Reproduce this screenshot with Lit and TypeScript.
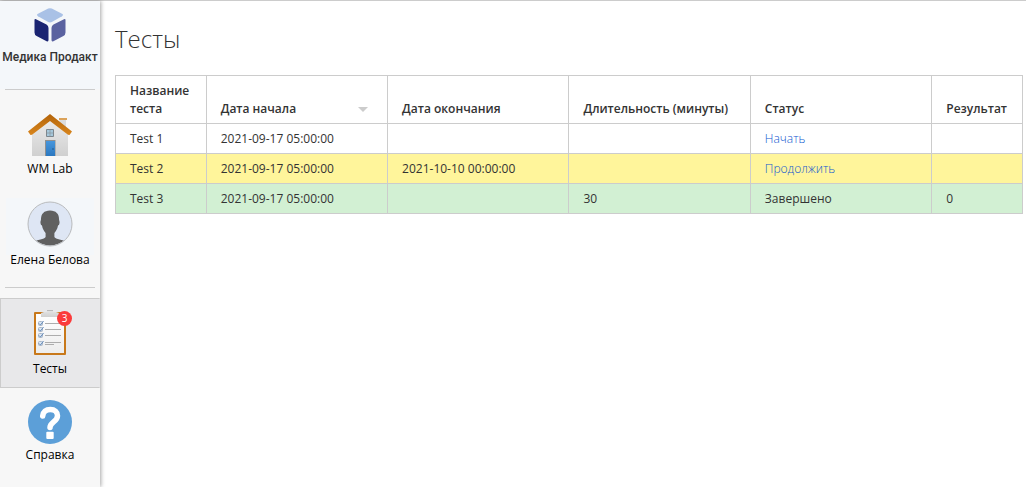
import { LitElement, html, css, svg, nothing } from "lit";
import { customElement, property } from "lit/decorators.js";

interface TestRow {
  name: string;
  start: string;
  end: string;
  minutes: string;
  status: string;
  action: boolean;
  result: string;
  tone: string;
}

const ROWS: TestRow[] = [
  { name: "Test 1", start: "2021-09-17 05:00:00", end: "", minutes: "", status: "Начать", action: true, result: "", tone: "" },
  { name: "Test 2", start: "2021-09-17 05:00:00", end: "2021-10-10 00:00:00", minutes: "", status: "Продолжить", action: true, result: "", tone: "active" },
  { name: "Test 3", start: "2021-09-17 05:00:00", end: "", minutes: "30", status: "Завершено", action: false, result: "0", tone: "done" },
];

const logoIcon = html`<svg width="32" height="34" viewBox="0 0 32 34" aria-hidden="true">
  <path d="M14.2 .6Q16 -.3 17.8 .6L28 5.800Q30 7 28 8.200L17.800 14Q16 14.900 14.200 14L4 8.200Q2 7 4 5.800Z" fill="#a9c1e6"/>
  <path d="M.5 12Q.5 10.400 2 11.200L12.500 16.600Q14.500 17.800 14.500 20V32Q14.500 34 12.600 33.200L2.600 28Q.5 26.800 .5 24.500Z" fill="#1a2472"/>
  <path d="M31.500 12Q31.500 10.400 30 11.200L19.500 16.600Q17.500 17.800 17.500 20V32Q17.500 34 19.400 33.200L29.400 28Q31.500 26.800 31.500 24.500Z" fill="#5a62a0"/>
</svg>`;

const homeIcon = html`<svg width="44" height="44" viewBox="0 0 44 44" aria-hidden="true">
  <defs>
    <linearGradient id="wall" x1="0" y1="0" x2="0" y2="1"><stop offset="0" stop-color="#ededed"/><stop offset="1" stop-color="#d0d0d0"/></linearGradient>
    <linearGradient id="door" x1="0" y1="0" x2="0" y2="1"><stop offset="0" stop-color="#4796dc"/><stop offset="1" stop-color="#2c78c0"/></linearGradient>
    <linearGradient id="roof" x1="0" y1="0" x2="0" y2="1"><stop offset="0" stop-color="#b3640a"/><stop offset="1" stop-color="#d8851c"/></linearGradient>
  </defs>
  <path d="M31.500 5h6.500v12h-6.500z" fill="#dcdcdc"/>
  <path d="M31 4h8v2h-8z" fill="#dba25a"/>
  <path d="M4 18 22 3l18 15v24H4z" fill="url(#wall)"/>
  <path d="M22 0 44 17.500l-2.500 3.500-1.500-.2L22 7 4 20.800l-1.500.2L0 17.500z" fill="url(#roof)"/>
  <path d="M18.500 15.500h7v7h-7z" fill="#a5c8dc" stroke="#7d868c"/>
  <path d="M22 15.500v7M18.500 19h7" stroke="#8c969c" stroke-width=".7"/>
  <path d="M17 26h10.500v16H17z" fill="#8f8f8f"/>
  <path d="M18 27h9v15h-9z" fill="url(#door)"/>
  <circle cx="25" cy="35" r=".7" fill="#1b4670"/>
</svg>`;

const userIcon = html`<svg width="88" height="49" viewBox="-21 -1 88 49" overflow="visible" aria-hidden="true">
  <defs><clipPath id="face"><circle cx="23" cy="23" r="21.500"/></clipPath></defs>
  <rect x="-21" y="-3" width="88" height="57" fill="#f4f7fa"/>
  <circle cx="23" cy="23" r="22" fill="#dee6f4"/>
  <path clip-path="url(#face)" d="M23 9.500c-6 0-9 3.500-9 8.500 0 2-.9 2.300-.4 4.400.3 1.400.9 1.800 1.400 2.100.6 3.500 2 5.600 3.600 7.500V36c-1 2.500-8.600 2.500-12.600 5v6h34v-6c-4-2.500-11.600-2.500-12.600-5v-4c1.600-1.900 3-4 3.600-7.500.5-.3 1.100-.7 1.400-2.100.5-2.100-.4-2.400-.4-4.400 0-5-3-8.500-9-8.500Z" fill="#606060"/>
  <circle cx="23" cy="23" r="22" fill="none" stroke="#b9bbbd"/>
</svg>`;

const check = (y: number) => svg`
  <rect x="4.500" y=${y + 0.5} width="4" height="4" rx="1" fill="#dde7f2" stroke="#a9b6c6"/>
  <path d=${`M5 ${y + 2.5}l1.500 1.500L9.500 ${y}`} fill="none" stroke="#6288b8"/>`;

const testsIcon = html`<svg width="32" height="48" viewBox="0 0 32 48" aria-hidden="true">
  <defs>
    <linearGradient id="sheet" x1="0" y1="0" x2="0" y2="1"><stop offset="0" stop-color="#fff"/><stop offset="1" stop-color="#ededed"/></linearGradient>
    <linearGradient id="clip" x1="0" y1="0" x2="0" y2="1"><stop offset="0" stop-color="#e6e6e6"/><stop offset="1" stop-color="#d0d0d0"/></linearGradient>
  </defs>
  <rect y="2" width="32" height="43" rx="1" fill="#c8781a"/>
  <path d="M2 4h28v39H2z" fill="url(#sheet)"/>
  <path d="M13 0h6v2h3l3 1v4H7V3l3-1h3z" fill="url(#clip)"/>
  <path d="M13 .5h6" stroke="#b9b9b9"/>
  ${[11, 17, 23, 31].map(check)}
  <path d="M11 13.500h16M11 19.500h16M11 25.500h16M11 32.500h16M11 34.500h9" stroke="#adadad"/>
</svg>`;

const helpIcon = html`<svg width="44" height="44" viewBox="0 0 44 44" aria-hidden="true">
  <circle cx="22" cy="22" r="22" fill="#5c9fd8"/>
  <path d="M14.700 16c.3-4.300 3.300-6.500 7.600-6.500 4.500 0 7.200 2.500 7.200 6.200 0 6-7.500 6.300-7.500 11.800" fill="none" stroke="#fff" stroke-width="5.500" stroke-linecap="round"/>
  <rect x="18.300" y="31.800" width="7.400" height="7.200" rx="1" fill="#fff"/>
</svg>`;

@customElement("side-item")
class SideItem extends LitElement {
  static styles = css`
    :host { display: block; }
    .item {
      display: flex;
      flex-direction: column;
      align-items: center;
      gap: 3px;
      padding: 12px 0 11px;
      color: #000;
      font-size: 12px;
      line-height: 16px;
      text-decoration: none;
      white-space: nowrap;
    }
    .current {
      padding: 11px 0 10px;
      background: #e8e8ea;
      border: 1px solid #ccc;
      border-right-color: transparent;
    }
    .icon { position: relative; display: flex; }
    .label { position: relative; }
    .badge {
      position: absolute;
      top: 1px;
      right: -6px;
      width: 15px;
      height: 15px;
      border-radius: 50%;
      background: #fb3b3b;
      color: #fff;
      font-size: 10px;
      line-height: 15px;
      text-align: center;
    }
  `;
  @property() label = "";
  @property() badge = "";
  @property({ type: Boolean }) current = false;
  @property({ attribute: false }) icon: unknown = nothing;

  render() {
    return html`<a class="item ${this.current ? "current" : ""}" href="#" aria-current=${this.current ? "page" : nothing}>
      <span class="icon">${this.icon}${this.badge ? html`<span class="badge">${this.badge}</span>` : nothing}</span>
      <span class="label">${this.label}</span>
    </a>`;
  }
}

@customElement("app-root")
class AppRoot extends LitElement {
  static styles = css`
    :host {
      box-sizing: border-box;
      display: flex;
      min-height: 100vh;
      border-top: 1px solid #ccc;
      background: #fff;
      color: #333;
      font-family: "Open Sans", "Noto Sans", sans-serif;
      font-size: 12px;
      line-height: 18px;
    }
    .side {
      flex: none;
      width: 100px;
      background: #f7f7f7;
      box-shadow: 1px 0 4px rgba(0, 0, 0, 0.35);
    }
    .logo {
      display: flex;
      flex-direction: column;
      align-items: center;
      gap: 7px;
      height: 81px;
      padding-top: 7px;
      background: #f4f7fa;
      color: #333;
      font: 500 12px/16px Roboto, sans-serif;
      text-decoration: none;
      white-space: nowrap;
    }
    .rule { margin: 0 5px; border: 0; border-top: 1px solid #ccc; }
    .group { padding: 12px 0 8px; }
    .tools { padding: 10px 0 8px; }
    .main { flex: 1; min-width: 0; padding: 21px 3px 0 15px; }
    .title { margin: 0 0 19px; font-size: 24px; line-height: 34px; font-weight: 300; }
    .tests { width: 100%; table-layout: fixed; border-collapse: collapse; }
    .tests th, .tests td {
      box-sizing: border-box;
      height: 30px;
      padding: 6px 14px 5px;
      border: 1px solid #ccc;
      text-align: left;
      vertical-align: bottom;
    }
    .tests th { font-weight: 600; }
    .tests .narrow { width: 10%; }
    .tests .wide { width: 20%; }
    .sort { display: flex; align-items: center; justify-content: space-between; padding-right: 5px; }
    .arrow { border: 5px solid transparent; border-top-color: #ccc; border-bottom: 0; }
    .active { background: #fff59b; }
    .done { background: #d2f0d3; }
    .link { color: #0f58d0; font-weight: 300; text-decoration: none; }
  `;

  render() {
    return html`
      <nav class="side">
        <a class="logo" href="#">${logoIcon}<span>Медика Продакт</span></a>
        <hr class="rule" />
        <div class="group">
          <side-item label="WM Lab" .icon=${homeIcon}></side-item>
          <side-item label="Елена Белова" .icon=${userIcon}></side-item>
        </div>
        <hr class="rule" />
        <div class="tools">
          <side-item label="Тесты" badge="3" current .icon=${testsIcon}></side-item>
          <side-item label="Справка" .icon=${helpIcon}></side-item>
        </div>
      </nav>
      <main class="main">
        <h1 class="title">Тесты</h1>
        <table class="tests">
          <thead>
            <tr>
              <th class="narrow" scope="col">Название теста</th>
              <th class="wide" scope="col"><span class="sort">Дата начала<span class="arrow"></span></span></th>
              <th class="wide" scope="col">Дата окончания</th>
              <th class="wide" scope="col">Длительность (минуты)</th>
              <th class="wide" scope="col">Статус</th>
              <th class="narrow" scope="col">Результат</th>
            </tr>
          </thead>
          <tbody>
            ${ROWS.map((r) => html`<tr class=${r.tone}>
              <td>${r.name}</td>
              <td>${r.start}</td>
              <td>${r.end}</td>
              <td>${r.minutes}</td>
              <td>${r.action ? html`<a class="link" href="#">${r.status}</a>` : r.status}</td>
              <td>${r.result}</td>
            </tr>`)}
          </tbody>
        </table>
      </main>
    `;
  }
}
